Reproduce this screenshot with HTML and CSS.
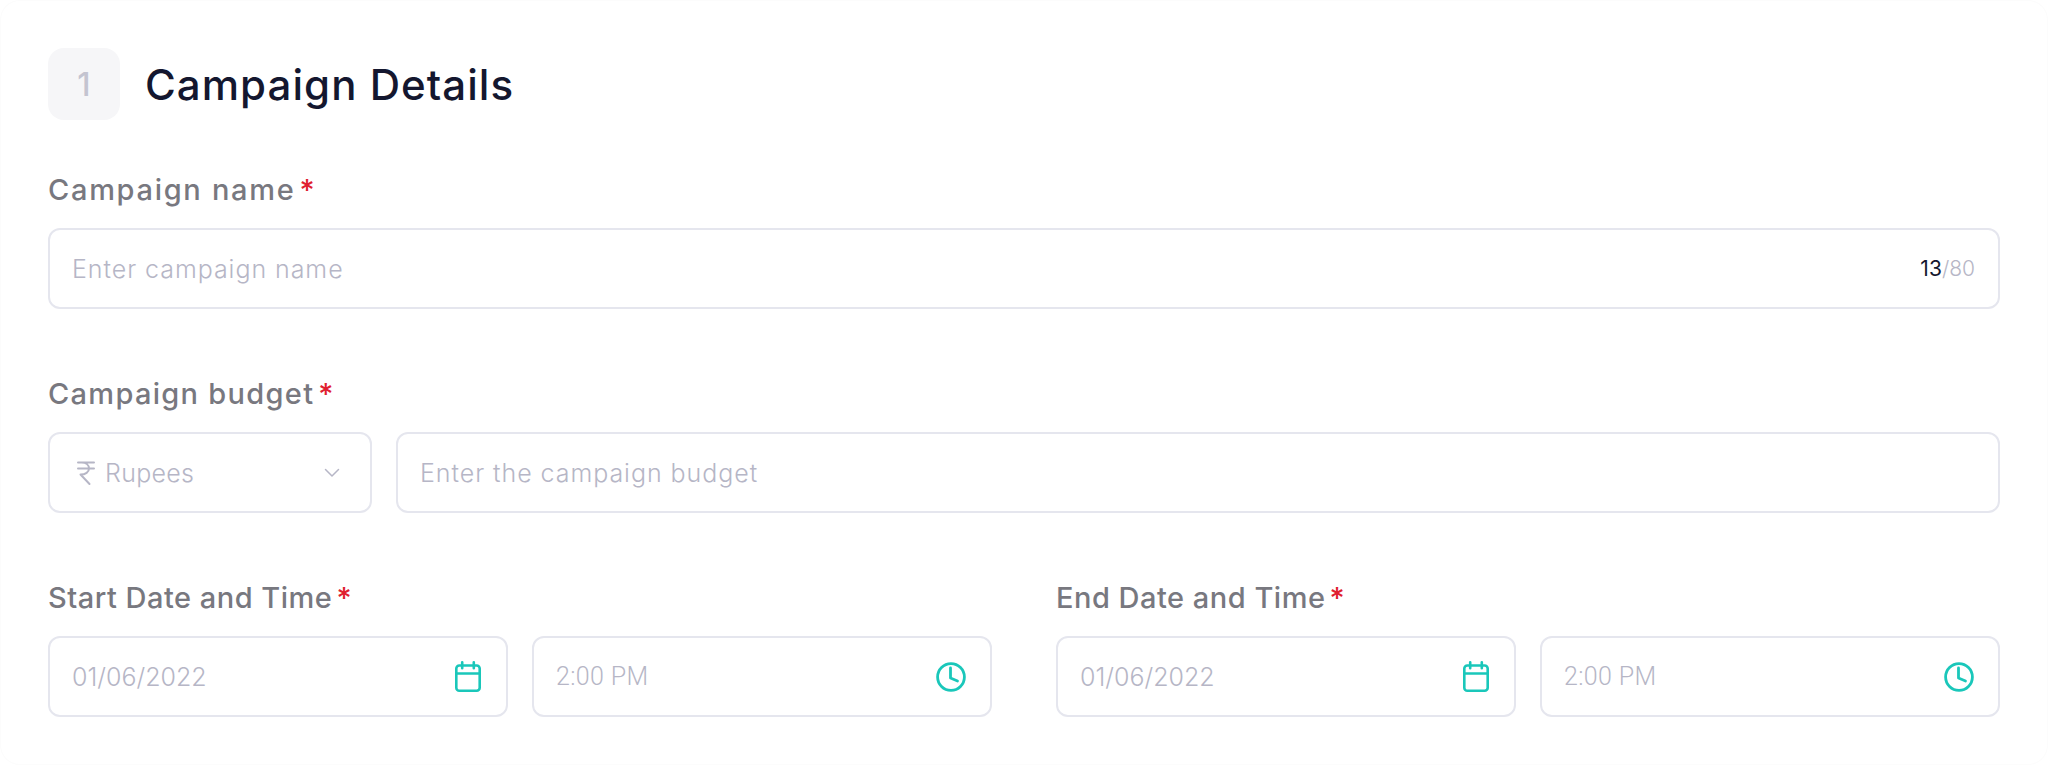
FILE: index.html
```html
<!DOCTYPE html>
<html lang="en">
<head>
<meta charset="utf-8">
<title>Campaign Details</title>
<link rel="stylesheet" href="styles.css">
</head>
<body>
<main class="card">
  <header class="section-head">
    <div class="step">1</div>
    <h1 class="section-title">Campaign Details</h1>
  </header>

  <section class="field field-name">
    <label class="label">Campaign name<span class="req">*</span></label>
    <div class="control">
      <span class="placeholder">Enter campaign name</span>
      <span class="counter"><span class="count">13</span>/80</span>
    </div>
  </section>

  <section class="field field-budget">
    <label class="label label-budget">Campaign budget<span class="req">*</span></label>
    <div class="row">
      <div class="control currency">
        <svg class="rupee" viewBox="0 0 20 26" width="20" height="26" fill="none" stroke="currentColor" stroke-width="2" stroke-linecap="round" stroke-linejoin="round"><path d="M2 2.500h16M2 8.500h16M5.500 2.500c4.500 0 7.500 2.500 7.500 6s-3.500 6-8.500 6L13.500 24"/></svg>
        <span class="placeholder rupees">Rupees</span>
        <svg class="chevron" viewBox="0 0 16 10" width="16" height="10" fill="none" stroke="currentColor" stroke-width="1.500" stroke-linecap="round" stroke-linejoin="round"><path d="M1.500 1.500 8 8l6.500-6.500"/></svg>
      </div>
      <div class="control grow">
        <span class="placeholder">Enter the campaign budget</span>
      </div>
    </div>
  </section>

  <div class="dates">
    <section class="field">
      <label class="label label-date">Start Date and Time<span class="req">*</span></label>
      <div class="pair">
        <div class="control">
          <span class="placeholder date">01/06/2022</span>
          <svg class="icon calendar" viewBox="0 0 26 31" width="26" height="31" fill="none" stroke="currentColor" stroke-width="2.600" stroke-linecap="round" stroke-linejoin="round"><rect x="1.300" y="4.500" width="23.400" height="25.200" rx="3"/><path d="M1.300 12.500h23.400M7.200 1.300v6M18.800 1.300v6"/></svg>
        </div>
        <div class="control">
          <span class="placeholder time">2:00 PM</span>
          <svg class="icon" viewBox="0 0 30 30" width="30" height="30" fill="none" stroke="currentColor" stroke-width="2.800" stroke-linecap="round" stroke-linejoin="round"><circle cx="15" cy="15" r="13.400"/><path d="M14.500 6v10l7 3"/></svg>
        </div>
      </div>
    </section>
    <section class="field">
      <label class="label label-date">End Date and Time<span class="req">*</span></label>
      <div class="pair">
        <div class="control">
          <span class="placeholder date">01/06/2022</span>
          <svg class="icon calendar" viewBox="0 0 26 31" width="26" height="31" fill="none" stroke="currentColor" stroke-width="2.600" stroke-linecap="round" stroke-linejoin="round"><rect x="1.300" y="4.500" width="23.400" height="25.200" rx="3"/><path d="M1.300 12.500h23.400M7.200 1.300v6M18.800 1.300v6"/></svg>
        </div>
        <div class="control">
          <span class="placeholder time">2:00 PM</span>
          <svg class="icon" viewBox="0 0 30 30" width="30" height="30" fill="none" stroke="currentColor" stroke-width="2.800" stroke-linecap="round" stroke-linejoin="round"><circle cx="15" cy="15" r="13.400"/><path d="M14.500 6v10l7 3"/></svg>
        </div>
      </div>
    </section>
  </div>
</main>
</body>
</html>
```

FILE: styles.css
```css
* { box-sizing: border-box; }
html, body { margin: 0; height: 765px; background: #fff; overflow: hidden; }
body { font-family: "Inter", "Liberation Sans", sans-serif; }

.card {
  height: 765px;
  padding: 48px;
  background: #fff;
  border-radius: 20px;
  box-shadow: inset 0 0 0 1px #fcfcfc;
}

.section-head { display: flex; align-items: center; gap: 25px; height: 72px; }
.step {
  width: 72px; height: 72px;
  border-radius: 16px;
  background: #f6f6f8;
  color: #c4c4d0;
  font-size: 32px;
  font-weight: 500;
  display: flex; align-items: center; justify-content: center;
}
.section-title {
  margin: 0;
  font-size: 42px;
  font-weight: 500;
  letter-spacing: 1.05px;
  color: #14172f;
}

.field { display: flex; flex-direction: column; gap: 18px; }
.field-name { margin-top: 50px; }
.field-budget { margin-top: 65px; }
.dates { margin-top: 65px; display: grid; grid-template-columns: 1fr 1fr; gap: 64px; }

.label {
  height: 40px;
  line-height: 40px;
  font-size: 29px;
  font-weight: 500;
  letter-spacing: 1.7px;
  color: #78787f;
}
.label-budget { letter-spacing: 1.3px; }
.label-date { letter-spacing: 0.5px; }
.req { color: #e0202f; margin-left: 4px; letter-spacing: 0; }

.control {
  height: 81px;
  border: 2px solid #e5e6ee;
  border-radius: 12px;
  padding: 0 22px;
  display: flex;
  align-items: center;
  justify-content: space-between;
  background: #fff;
  color: #b6b6c6;
  font-size: 25px;
  font-weight: 350;
}
.placeholder { color: #b6b6c6; letter-spacing: 0.95px; }
.rupees { letter-spacing: 0.3px; }
.date { letter-spacing: 0; }
.time { font-family: "Roboto", sans-serif; font-weight: 300; letter-spacing: 0.35px; }
.counter { font-size: 21px; font-weight: 300; color: #b6b6c6; margin-right: 1px; }
.count { color: #14172f; font-weight: 400; }

.row { display: flex; gap: 24px; }
.currency { width: 324px; flex: none; justify-content: flex-start; gap: 9px; padding-left: 26px; }
.chevron { margin-left: auto; margin-right: 8px; }
.grow { flex: 1; }

.pair { display: grid; grid-template-columns: 1fr 1fr; gap: 24px; }
.icon { color: #1ac7ba; margin-right: 2px; flex: none; }
.calendar { margin-right: 3px; }
```
